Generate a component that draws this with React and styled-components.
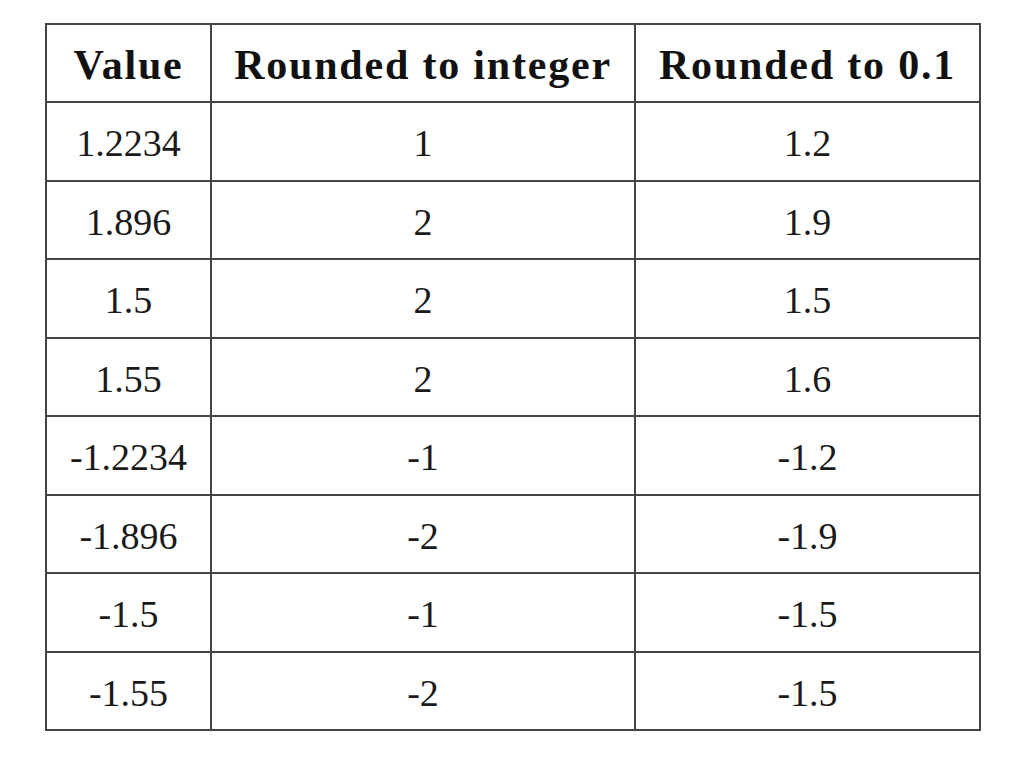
import styled, { createGlobalStyle } from 'styled-components';

const rows = [
  ['1.2234', '1', '1.2'],
  ['1.896', '2', '1.9'],
  ['1.5', '2', '1.5'],
  ['1.55', '2', '1.6'],
  ['-1.2234', '-1', '-1.2'],
  ['-1.896', '-2', '-1.9'],
  ['-1.5', '-1', '-1.5'],
  ['-1.55', '-2', '-1.5'],
];

export default function App() {
  return (
    <>
      <GlobalStyle />
      <Page>
        <Table>
          <colgroup>
            <col style={{ width: 165 }} />
            <col style={{ width: 424 }} />
            <col style={{ width: 345 }} />
          </colgroup>
          <thead>
            <tr>
              <HeadCell>Value</HeadCell>
              <HeadCell>Rounded to integer</HeadCell>
              <HeadCell>Rounded to 0.1</HeadCell>
            </tr>
          </thead>
          <tbody>
            {rows.map((row) => (
              <Row key={row[0]}>
                {row.map((cell, i) => (
                  <Cell key={i}>{cell}</Cell>
                ))}
              </Row>
            ))}
          </tbody>
        </Table>
      </Page>
    </>
  );
}

const GlobalStyle = createGlobalStyle`
  body {
    margin: 0;
    background: #ffffff;
    font-family: "Liberation Serif", "Times New Roman", serif;
    color: #1a1a1a;
  }
`;

const Page = styled.div`
  padding: 23px 0 0 45px;
`;

const Table = styled.table`
  border-collapse: collapse;
  table-layout: fixed;
  width: 936px;
  border: 2px solid #444;
`;

const HeadCell = styled.th`
  height: 72px;
  padding: 4px 0 0;
  border: 2px solid #444;
  font-size: 42px;
  font-weight: bold;
  letter-spacing: 1.8px;
  text-align: center;
  color: #111;
`;

const Row = styled.tr`
  height: 78.5px;
`;

const Cell = styled.td`
  padding: 4px 0 0;
  border: 2px solid #444;
  font-size: 38px;
  text-align: center;
  color: #1a1a1a;
`;
